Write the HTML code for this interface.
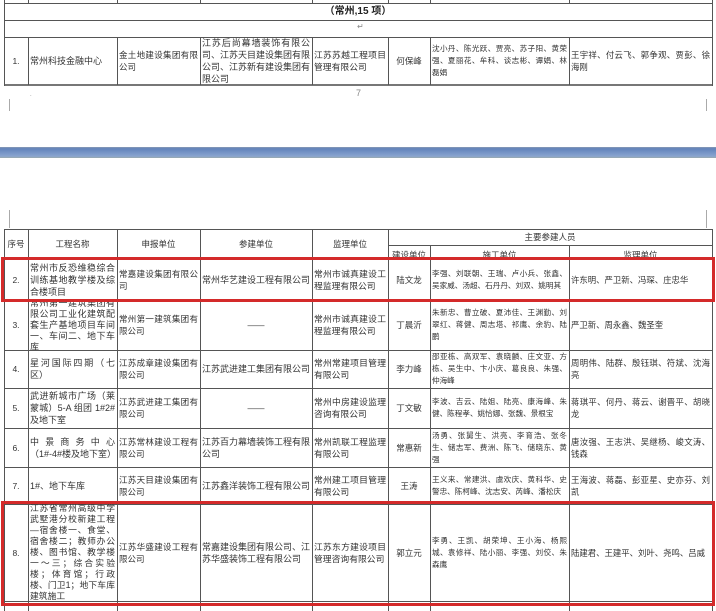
<!DOCTYPE html>
<html><head><meta charset="utf-8">
<style>
*{margin:0;padding:0;box-sizing:border-box}
body{width:716px;height:611px;overflow:hidden;background:#fff;position:relative;font-family:"Liberation Sans","Noto Sans CJK SC",sans-serif;color:#333}
.v{position:absolute;width:1px;background:#555}
.h{position:absolute;height:1px;background:#555}
.c{position:absolute;display:flex;align-items:center;overflow:hidden;font-size:8.5px;line-height:12px;padding:0 2px;text-align:justify}
.c span{display:block;width:100%}
.ctr{justify-content:center;text-align:center}
.ctr span{text-align:center}
.n{font-size:9px}
.c4{font-size:9px}
.c5{font-size:8.8px}
.c7{font-size:7.6px}
.c8{font-size:8.4px}
.red{position:absolute;border:3px solid #d42a2a}
.mk{position:absolute;width:1px;background:#aaa}
.pm{position:absolute;font-size:8px;color:#888}
</style></head><body>

<div class="h" style="left:4px;top:3px;width:709px"></div>
<div class="h" style="left:4px;top:20px;width:709px"></div>
<div class="h" style="left:4px;top:37px;width:709px"></div>
<div class="h" style="left:4px;top:84px;width:709px;height:2px;background:#777"></div>
<div class="v" style="left:4px;top:0;height:86px"></div>
<div class="v" style="left:712px;top:0;height:86px"></div>
<div class="v" style="left:28px;top:0;height:3px"></div><div class="v" style="left:28px;top:37px;height:48px"></div>
<div class="v" style="left:117px;top:0;height:3px"></div><div class="v" style="left:117px;top:37px;height:48px"></div>
<div class="v" style="left:200px;top:0;height:3px"></div><div class="v" style="left:200px;top:37px;height:48px"></div>
<div class="v" style="left:312px;top:0;height:3px"></div><div class="v" style="left:312px;top:37px;height:48px"></div>
<div class="v" style="left:388px;top:0;height:3px"></div><div class="v" style="left:388px;top:37px;height:48px"></div>
<div class="v" style="left:430px;top:0;height:3px"></div><div class="v" style="left:430px;top:37px;height:48px"></div>
<div class="v" style="left:569px;top:0;height:3px"></div><div class="v" style="left:569px;top:37px;height:48px"></div>
<div class="c ctr" style="left:4px;top:3px;width:708px;height:17px;font-size:10px;font-weight:bold;color:#222"><span>（常州,15 项）</span></div>
<div class="pm" style="left:357px;top:22px">↵</div>

<div class="c ctr" style="left:4px;top:37px;width:24px;height:47px"><span>1.</span></div>
<div class="c n" style="left:28px;top:37px;width:89px;height:47px"><span>常州科技金融中心</span></div>
<div class="c" style="left:117px;top:37px;width:83px;height:47px"><span>金土地建设集团有限公司</span></div>
<div class="c c4" style="left:200px;top:37px;width:112px;height:47px"><span>江苏后尚幕墙装饰有限公司、江苏天目建设集团有限公司、江苏新有建设集团有限公司</span></div>
<div class="c c5" style="left:312px;top:37px;width:76px;height:47px"><span>江苏苏越工程项目管理有限公司</span></div>
<div class="c ctr" style="left:388px;top:37px;width:42px;height:47px"><span>何保峰</span></div>
<div class="c c7" style="left:430px;top:37px;width:139px;height:47px"><span>沈小丹、陈光跃、贾亮、苏子阳、黄荣强、夏丽花、牟科、谈志彬、谭娟、林磊娟</span></div>
<div class="c c8" style="left:569px;top:37px;width:143px;height:47px"><span>王宇祥、付云飞、郭争观、贾彭、徐海刚</span></div>

<div class="pm" style="left:356px;top:88px;font-size:9px">7</div>
<div class="pm" style="left:30px;top:92px;font-size:6px">.</div>
<div class="mk" style="left:9px;top:99px;height:12px"></div>
<div class="mk" style="left:706px;top:99px;height:12px"></div>

<div style="position:absolute;left:0;top:147px;width:716px;height:11px;background:linear-gradient(#8a9bb5 0,#6283bb 15%,#7b99c9 60%,#8ba5cf 85%,#9aa 100%)"></div>

<div class="mk" style="left:9px;top:210px;height:18px"></div>
<div class="mk" style="left:706px;top:210px;height:18px"></div>

<div class="h" style="left:4px;top:229px;width:709px"></div>
<div class="h" style="left:388px;top:245px;width:325px"></div>
<div class="h" style="left:4px;top:259px;width:709px"></div>
<div class="h" style="left:4px;top:300px;width:709px"></div>
<div class="h" style="left:4px;top:350px;width:709px"></div>
<div class="h" style="left:4px;top:388px;width:709px"></div>
<div class="h" style="left:4px;top:428px;width:709px"></div>
<div class="h" style="left:4px;top:467px;width:709px"></div>
<div class="h" style="left:4px;top:504px;width:709px"></div>
<div class="h" style="left:4px;top:601px;width:709px"></div>
<div class="h" style="left:4px;top:604px;width:709px"></div>
<div class="v" style="left:4px;top:229px;height:382px"></div>
<div class="v" style="left:28px;top:229px;height:382px"></div>
<div class="v" style="left:117px;top:229px;height:382px"></div>
<div class="v" style="left:200px;top:229px;height:382px"></div>
<div class="v" style="left:312px;top:229px;height:382px"></div>
<div class="v" style="left:388px;top:229px;height:382px"></div>
<div class="v" style="left:430px;top:245px;height:366px"></div>
<div class="v" style="left:569px;top:245px;height:366px"></div>
<div class="v" style="left:712px;top:229px;height:382px"></div>

<div class="c ctr" style="left:4px;top:229px;width:24px;height:30px;padding:0"><span>序号</span></div>
<div class="c ctr" style="left:28px;top:229px;width:89px;height:30px"><span>工程名称</span></div>
<div class="c ctr" style="left:117px;top:229px;width:83px;height:30px"><span>申报单位</span></div>
<div class="c ctr" style="left:200px;top:229px;width:112px;height:30px"><span>参建单位</span></div>
<div class="c ctr" style="left:312px;top:229px;width:76px;height:30px"><span>监理单位</span></div>
<div class="c ctr" style="left:388px;top:229px;width:324px;height:16px"><span>主要参建人员</span></div>
<div class="c ctr" style="left:388px;top:248px;width:42px;height:14px"><span>建设单位</span></div>
<div class="c ctr" style="left:430px;top:248px;width:139px;height:14px"><span>施工单位</span></div>
<div class="c ctr" style="left:569px;top:248px;width:143px;height:14px"><span>监理单位</span></div>

<div class="c ctr" style="left:4px;top:259px;width:24px;height:41px"><span>2.</span></div>
<div class="c n" style="left:28px;top:259px;width:89px;height:41px"><span>常州市反恐维稳综合训练基地教学楼及综合楼项目</span></div>
<div class="c" style="left:117px;top:259px;width:83px;height:41px"><span>常嘉建设集团有限公司</span></div>
<div class="c c4" style="left:200px;top:259px;width:112px;height:41px"><span>常州华艺建设工程有限公司</span></div>
<div class="c c5" style="left:312px;top:259px;width:76px;height:41px"><span>常州市诚真建设工程监理有限公司</span></div>
<div class="c ctr" style="left:388px;top:259px;width:42px;height:41px"><span>陆文龙</span></div>
<div class="c c7" style="left:430px;top:259px;width:139px;height:41px"><span>李强、刘联朝、王瑞、卢小兵、张鑫、吴家威、汤超、石丹丹、刘双、姚明其</span></div>
<div class="c c8" style="left:569px;top:259px;width:143px;height:41px"><span>许东明、严卫新、冯琛、庄忠华</span></div>

<div class="c ctr" style="left:4px;top:300px;width:24px;height:50px"><span>3.</span></div>
<div class="c n" style="left:28px;top:300px;width:89px;height:50px;line-height:11px"><span>常州第一建筑集团有限公司工业化建筑配套生产基地项目车间一、车间二、地下车库</span></div>
<div class="c" style="left:117px;top:300px;width:83px;height:50px"><span>常州第一建筑集团有限公司</span></div>
<div class="c ctr" style="left:200px;top:300px;width:112px;height:50px"><span>——</span></div>
<div class="c c5" style="left:312px;top:300px;width:76px;height:50px"><span>常州市诚真建设工程监理有限公司</span></div>
<div class="c ctr" style="left:388px;top:300px;width:42px;height:50px"><span>丁晨沂</span></div>
<div class="c c7" style="left:430px;top:300px;width:139px;height:50px"><span>朱新忠、曹立破、夏沛佳、王渊勤、刘翠红、蒋健、周志塔、祁鹰、余豹、陆鹏</span></div>
<div class="c c8" style="left:569px;top:300px;width:143px;height:50px"><span>严卫新、周永鑫、魏圣奎</span></div>

<div class="c ctr" style="left:4px;top:350px;width:24px;height:38px"><span>4.</span></div>
<div class="c n" style="left:28px;top:350px;width:89px;height:38px"><span>星河国际四期（七区）</span></div>
<div class="c" style="left:117px;top:350px;width:83px;height:38px"><span>江苏成章建设集团有限公司</span></div>
<div class="c c4" style="left:200px;top:350px;width:112px;height:38px"><span>江苏武进建工集团有限公司</span></div>
<div class="c c5" style="left:312px;top:350px;width:76px;height:38px"><span>常州常建项目管理有限公司</span></div>
<div class="c ctr" style="left:388px;top:350px;width:42px;height:38px"><span>李力峰</span></div>
<div class="c c7" style="left:430px;top:350px;width:139px;height:38px"><span>邵亚栋、高双军、袁晓麟、庄文亚、方栋、吴生中、卞小庆、葛良良、朱强、仲海峰</span></div>
<div class="c c8" style="left:569px;top:350px;width:143px;height:38px"><span>周明伟、陆群、殷钰琪、符斌、沈海亮</span></div>

<div class="c ctr" style="left:4px;top:388px;width:24px;height:40px"><span>5.</span></div>
<div class="c n" style="left:28px;top:388px;width:89px;height:40px"><span>武进新城市广场（莱蒙城）5-A 组团 1#2#及地下室</span></div>
<div class="c" style="left:117px;top:388px;width:83px;height:40px"><span>江苏武进建工集团有限公司</span></div>
<div class="c ctr" style="left:200px;top:388px;width:112px;height:40px"><span>——</span></div>
<div class="c c5" style="left:312px;top:388px;width:76px;height:40px"><span>常州中房建设监理咨询有限公司</span></div>
<div class="c ctr" style="left:388px;top:388px;width:42px;height:40px"><span>丁文敏</span></div>
<div class="c c7" style="left:430px;top:388px;width:139px;height:40px"><span>李波、吉云、陆姐、陆亮、康海峰、朱健、陈程孝、姚恰娜、张魏、景根宝</span></div>
<div class="c c8" style="left:569px;top:388px;width:143px;height:40px"><span>蒋琪平、何丹、蒋云、谢晋平、胡晓龙</span></div>

<div class="c ctr" style="left:4px;top:428px;width:24px;height:39px"><span>6.</span></div>
<div class="c n" style="left:28px;top:428px;width:89px;height:39px"><span>中景商务中心（1#-4#楼及地下室）</span></div>
<div class="c" style="left:117px;top:428px;width:83px;height:39px"><span>江苏常林建设工程有限公司</span></div>
<div class="c c4" style="left:200px;top:428px;width:112px;height:39px"><span>江苏百力幕墙装饰工程有限公司</span></div>
<div class="c c5" style="left:312px;top:428px;width:76px;height:39px"><span>常州凯联工程监理有限公司</span></div>
<div class="c ctr" style="left:388px;top:428px;width:42px;height:39px"><span>常惠新</span></div>
<div class="c c7" style="left:430px;top:428px;width:139px;height:39px"><span>汤勇、张舅生、洪亮、李育浩、张冬生、储志军、费洲、陈飞、储晓东、黄强</span></div>
<div class="c c8" style="left:569px;top:428px;width:143px;height:39px"><span>唐汝强、王志洪、吴继杨、峻文涛、钱森</span></div>

<div class="c ctr" style="left:4px;top:467px;width:24px;height:37px"><span>7.</span></div>
<div class="c n" style="left:28px;top:467px;width:89px;height:37px"><span>1#、地下车库</span></div>
<div class="c" style="left:117px;top:467px;width:83px;height:37px"><span>江苏天目建设集团有限公司</span></div>
<div class="c c4" style="left:200px;top:467px;width:112px;height:37px"><span>江苏鑫洋装饰工程有限公司</span></div>
<div class="c c5" style="left:312px;top:467px;width:76px;height:37px"><span>常州建工项目管理有限公司</span></div>
<div class="c ctr" style="left:388px;top:467px;width:42px;height:37px"><span>王涛</span></div>
<div class="c c7" style="left:430px;top:467px;width:139px;height:37px"><span>王义来、常建洪、虞欢庆、黄科华、史警忠、陈柯峰、沈志安、芮峰、潘松庆</span></div>
<div class="c c8" style="left:569px;top:467px;width:143px;height:37px"><span>王海波、蒋磊、彭亚星、史亦芬、刘凯</span></div>

<div class="c ctr" style="left:4px;top:504px;width:24px;height:97px"><span>8.</span></div>
<div class="c n" style="left:28px;top:504px;width:89px;height:97px;font-size:8.8px;line-height:11px"><span>江苏省常州高级中学武墅港分校新建工程—宿舍楼一、食堂、宿舍楼二；教师办公楼、图书馆、教学楼一～三；综合实验楼；体育馆；行政楼、门卫1；地下车库建筑施工</span></div>
<div class="c" style="left:117px;top:504px;width:83px;height:97px"><span>江苏华盛建设工程有限公司</span></div>
<div class="c c4" style="left:200px;top:504px;width:112px;height:97px"><span>常嘉建设集团有限公司、江苏华盛装饰工程有限公司</span></div>
<div class="c c5" style="left:312px;top:504px;width:76px;height:97px"><span>江苏东方建设项目管理咨询有限公司</span></div>
<div class="c ctr" style="left:388px;top:504px;width:42px;height:97px"><span>郭立元</span></div>
<div class="c c7" style="left:430px;top:504px;width:139px;height:97px"><span>李勇、王凯、胡荣坤、王小海、杨熙城、袁修祥、陆小丽、李强、刘佼、朱森鹰</span></div>
<div class="c c8" style="left:569px;top:504px;width:143px;height:97px"><span>陆建君、王建平、刘叶、尧鸣、吕威</span></div>

<div class="red" style="left:1px;top:257px;width:714px;height:45px"></div>
<div class="red" style="left:1px;top:501px;width:714px;height:105px"></div>
</body></html>
